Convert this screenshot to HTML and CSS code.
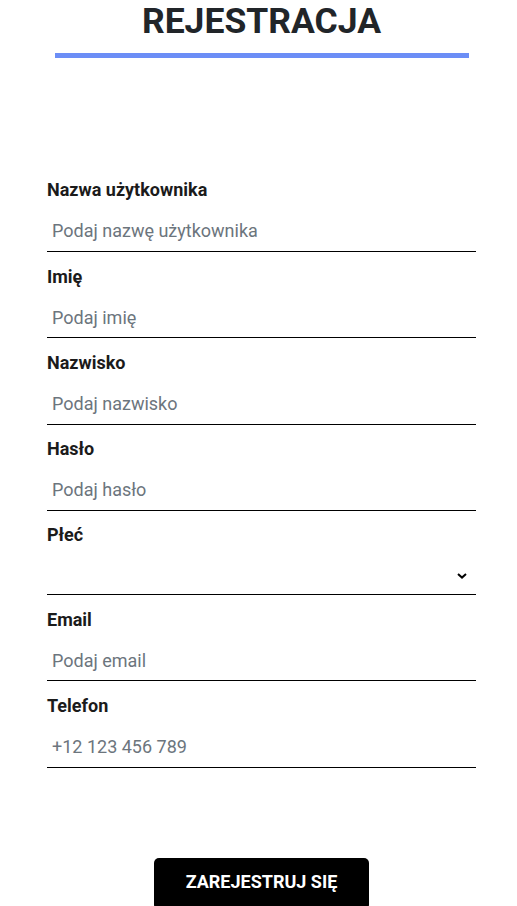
FILE: index.html
```html
<!DOCTYPE html>
<html lang="pl">
<head>
<meta charset="utf-8">
<title>Rejestracja</title>
<link rel="stylesheet" href="styles.css">
</head>
<body>
<div class="page">
  <header class="header">
    <h1 class="title">REJESTRACJA</h1>
    <div class="title-bar"></div>
  </header>
  <form class="form">
    <div class="group">
      <label class="label" for="username">Nazwa użytkownika</label>
      <input class="input" id="username" type="text" placeholder="Podaj nazwę użytkownika">
    </div>
    <div class="group">
      <label class="label" for="name">Imię</label>
      <input class="input" id="name" type="text" placeholder="Podaj imię">
    </div>
    <div class="group">
      <label class="label" for="surname">Nazwisko</label>
      <input class="input" id="surname" type="text" placeholder="Podaj nazwisko">
    </div>
    <div class="group">
      <label class="label" for="password">Hasło</label>
      <input class="input" id="password" type="password" placeholder="Podaj hasło">
    </div>
    <div class="group">
      <label class="label" for="gender">Płeć</label>
      <div class="select-wrap">
        <select class="select" id="gender">
          <option></option>
          <option>Kobieta</option>
          <option>Mężczyzna</option>
        </select>
        <svg class="chevron" width="10" height="6" viewBox="0 0 10 6"><path d="M1 1 L5 4.6 L9 1" fill="none" stroke="#000" stroke-width="2"/></svg>
      </div>
    </div>
    <div class="group">
      <label class="label" for="email">Email</label>
      <input class="input" id="email" type="email" placeholder="Podaj email">
    </div>
    <div class="group">
      <label class="label" for="phone">Telefon</label>
      <input class="input" id="phone" type="tel" placeholder="+12 123 456 789">
    </div>
    <div class="actions">
      <button class="button" type="submit">ZAREJESTRUJ SIĘ</button>
    </div>
  </form>
</div>
</body>
</html>
```

FILE: styles.css
```css
html, body {
  margin: 0;
  padding: 0;
  background: #fff;
}
body {
  font-family: Roboto, "Liberation Sans", sans-serif;
  color: #212529;
}
.page {
  width: 429px;
  padding-left: 47px;
}
.header {
  display: flex;
  flex-direction: column;
  align-items: center;
}
.title {
  margin: 0;
  font-size: 35.5px;
  font-weight: 700;
  line-height: 43.4px;
  color: #212529;
}
.title-bar {
  width: 414px;
  height: 5px;
  margin-top: 9.6px;
  background: #6c8ef6;
}
.form {
  margin-top: 121.3px;
  display: flex;
  flex-direction: column;
}
.group {
  display: flex;
  flex-direction: column;
  margin-bottom: 13.6px;
}
.label {
  font-size: 18px;
  font-weight: 700;
  line-height: 21.1px;
  color: #1b1b1b;
  margin-bottom: 7.6px;
}
.input, .select {
  box-sizing: border-box;
  width: 100%;
  height: 44px;
  padding: 3px 5px 0;
  border: none;
  border-bottom: 1px solid #000;
  border-radius: 0;
  font-family: Roboto, "Liberation Sans", sans-serif;
  font-size: 18px;
  color: #212529;
  background: transparent;
  outline: none;
}
.input::placeholder {
  color: #6c757d;
  opacity: 1;
}
.select-wrap {
  position: relative;
}
.select {
  height: 42px;
  appearance: none;
  -webkit-appearance: none;
}
.chevron {
  position: absolute;
  right: 9px;
  top: 20px;
  pointer-events: none;
}
.actions {
  display: flex;
  justify-content: center;
  margin-top: 76.4px;
}
.button {
  width: 215px;
  padding: 13.3px 0 18px;
  border: none;
  border-radius: 5px;
  background: #000;
  color: #fff;
  font-family: Roboto, "Liberation Sans", sans-serif;
  font-size: 18px;
  font-weight: 700;
  line-height: 21px;
}
```
